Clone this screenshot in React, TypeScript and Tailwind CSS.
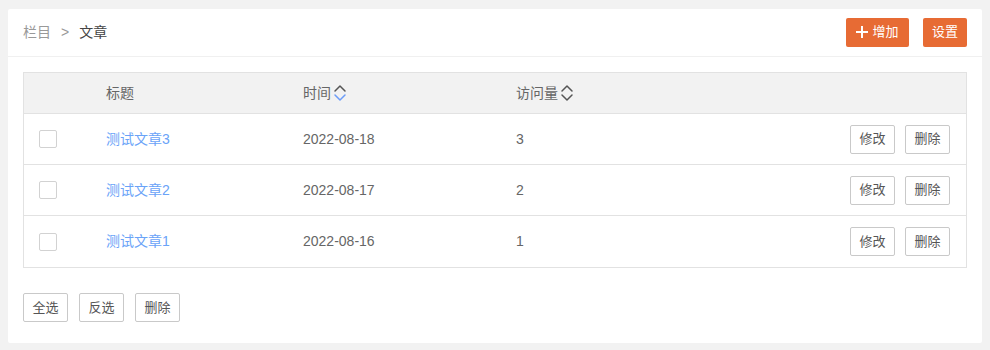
const rows = [
  { id: 3, title: '测试文章3', date: '2022-08-18', views: 3 },
  { id: 2, title: '测试文章2', date: '2022-08-17', views: 2 },
  { id: 1, title: '测试文章1', date: '2022-08-16', views: 1 },
];

const SortIcon = ({ active }: { active?: boolean }) => (
  <svg width="14" height="20" viewBox="0 0 14 20" fill="none" strokeWidth="1.5" strokeLinecap="round" strokeLinejoin="round" className="ml-[2px]">
    <polyline points="2,8 7,3 12,8" stroke="#555" />
    <polyline points="2,12 7,17 12,12" stroke={active ? '#6b9cf8' : '#555'} />
  </svg>
);

const Btn = ({ children }: { children: React.ReactNode }) => (
  <button className="h-[29px] w-[45px] rounded-[2px] border border-[#c9c9c9] bg-white text-[13px] text-[#555]">
    {children}
  </button>
);

export default function App() {
  return (
    <div
      className="min-h-[350px] bg-[#f2f2f2] pt-[9px] pl-[8px] pr-[8px]"
      style={{ fontFamily: '"Liberation Sans", "Noto Sans CJK SC", sans-serif' }}
    >
      <div className="rounded-[2px] bg-white pb-[21px]">
        {/* 顶部 */}
        <div className="flex h-[48px] items-center justify-between border-b border-[#f0f0f0] px-[15px]">
          <div className="flex items-center text-[14px]">
            <span className="text-[#999]">栏目</span>
            <span className="mx-[10px] text-[#999]">&gt;</span>
            <span className="text-[#444]">文章</span>
          </div>
          <div className="flex items-center gap-[14px] pb-[1px]">
            <button className="flex h-[29px] w-[63px] items-center justify-center gap-[4px] rounded-[2px] bg-[#e76b34] text-[13px] text-white">
              <svg width="12" height="12" viewBox="0 0 12 12" stroke="white" strokeWidth="2">
                <line x1="6" y1="0" x2="6" y2="12" />
                <line x1="0" y1="6" x2="12" y2="6" />
              </svg>
              增加
            </button>
            <button className="h-[29px] w-[44px] rounded-[2px] bg-[#e76b34] text-[13px] text-white">设置</button>
          </div>
        </div>

        {/* 表格 */}
        <div className="mx-[15px] mt-[15px] border border-[#e2e2e2] text-[14px]">
          <div className="grid h-[41px] grid-cols-[82px_197px_213px_1fr] items-center border-b border-[#e2e2e2] bg-[#f2f2f2] text-[#666]">
            <div />
            <div>标题</div>
            <div className="flex items-center">时间<SortIcon active /></div>
            <div className="flex items-center">访问量<SortIcon /></div>
          </div>
          {rows.map((r, i) => (
            <div
              key={r.id}
              className={`grid h-[51px] grid-cols-[82px_197px_213px_1fr] items-center ${i < rows.length - 1 ? 'border-b border-[#e2e2e2]' : ''}`}
            >
              <div className="pl-[15px]">
                <div className="h-[18px] w-[18px] rounded-[2px] border border-[#d2d2d2] bg-white" />
              </div>
              <div className="text-[#6aa3f8]">{r.title}</div>
              <div className="text-[#666]">{r.date}</div>
              <div className="flex items-center justify-between pr-[16px]">
                <span className="text-[#666]">{r.views}</span>
                <div className="flex gap-[10px]">
                  <Btn>修改</Btn>
                  <Btn>删除</Btn>
                </div>
              </div>
            </div>
          ))}
        </div>

        {/* 底部操作 */}
        <div className="mt-[25px] flex gap-[11px] px-[15px]">
          <Btn>全选</Btn>
          <Btn>反选</Btn>
          <Btn>删除</Btn>
        </div>
      </div>
    </div>
  );
}
